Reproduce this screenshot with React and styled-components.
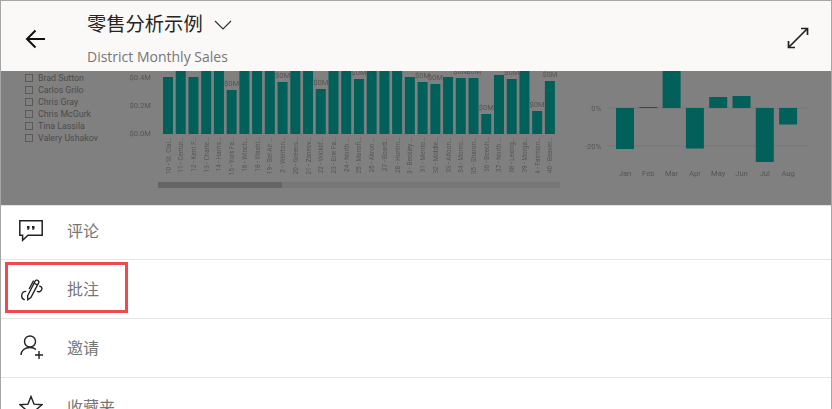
import React from "react"
import styled, { createGlobalStyle } from "styled-components"

const GlobalStyle = createGlobalStyle`
  html, body {
    margin: 0;
    padding: 0;
    background: #ffffff;
    overflow: hidden;
  }
`

const LEGEND = ["Brad Sutton", "Carlos Grilo", "Chris Gray", "Chris McGurk", "Tina Lassila", "Valery Ushakov"]

const STORES = [
  ["10 - St. Clai...", 6], ["11 - Centur...", -10], ["12 - Kent F...", 6], ["13 - Charle...", -10],
  ["14 - Harris...", -10], ["15 - York Fa...", 19], ["16 - Winch...", -10], ["18 - Washi...", -10],
  ["19 - Bel Air ...", -10], ["2 - Weirton...", 11], ["20 - Greens...", -10], ["21 - Zanesv...", -10],
  ["22 - Wicklif...", 18], ["23 - Erie Fa...", -10], ["24 - North ...", -10], ["25 - Mansfi...", 8],
  ["26 - Akron ...", -10], ["27 - Board...", -10], ["28 - Huntin...", -10], ["3 - Beckley ...", 6],
  ["31 - Mento...", 11], ["32 - Middle...", 13], ["33 - Altoon...", 6], ["34 - Monro...", 7],
  ["35 - Sharon...", 7], ["36 - Beech...", 43], ["37 - North ...", 4], ["38 - Lexing...", 8],
  ["39 - Morga...", -10], ["4 - Fairmon...", 40], ["40 - Beaver...", 10],
]

const MONTHS = [
  ["Jan", 0, 41], ["Feb", -1, 1], ["Mar", -37, 37], ["Apr", 0, 40.5],
  ["May", -11, 11], ["Jun", -12, 12], ["Jul", 0, 54], ["Aug", 0, 16.5],
]

const Page = styled.div`
  width: 832px;
  height: 409px;
  box-sizing: border-box;
  border: 1px solid #a6a6a6;
  border-bottom: 0;
  position: relative;
  overflow: hidden;
  background: #ffffff;
  font-family: "Open Sans", "Noto Sans CJK SC", sans-serif;
`

const Header = styled.header`
  height: 70px;
  background: #faf9f8;
  display: flex;
  align-items: flex-start;
  padding: 0 22px 0 24px;
`

const BackButton = styled.div`
  width: 62px;
  height: 70px;
  padding-top: 5px;
  box-sizing: border-box;
  display: flex;
  align-items: center;
  flex-shrink: 0;
`

const TitleBlock = styled.div`
  flex: 1;
  display: flex;
  flex-direction: column;
`

const TitleRow = styled.div`
  display: flex;
  align-items: center;
  gap: 11px;
  height: 47px;
`

const Title = styled.div`
  font-family: "Noto Sans CJK SC", sans-serif;
  font-size: 19.3px;
  color: #252423;
  margin-bottom: 4px;
`

const Subtitle = styled.div`
  font-family: "Open Sans", sans-serif;
  font-size: 14px;
  line-height: 18px;
  color: #767676;
`

const ExpandButton = styled.div`
  height: 70px;
  display: flex;
  align-items: center;
  padding-top: 4px;
  box-sizing: border-box;
`

const Report = styled.section`
  height: 134px;
  background: #808080;
  display: flex;
  overflow: hidden;
`

const Legend = styled.ul`
  list-style: none;
  margin: 0;
  padding: 1px 0 0 24px;
  box-sizing: border-box;
  width: 120px;
  flex-shrink: 0;
`

const LegendItem = styled.li`
  height: 12px;
  display: flex;
  align-items: center;
  gap: 5px;
  font-family: Roboto, sans-serif;
  font-size: 8.8px;
  color: #4c4c4c;
  white-space: nowrap;
`

const Check = styled.span`
  width: 6px;
  height: 6px;
  border: 1px solid #5a5a5a;
  flex-shrink: 0;
`

const Chart = styled.svg`
  display: block;
  flex-shrink: 0;
  filter: blur(0.3px);
`

const ChartText = styled.text`
  font-family: Roboto, sans-serif;
  font-size: ${(p) => p.$size || 7.6}px;
  fill: #555555;
`

const Menu = styled.nav`
  border-top: 1px solid #e3e3e3;
`

const Row = styled.div`
  height: 58px;
  border-bottom: 1px solid #e6e6e6;
  display: flex;
  align-items: center;
  padding-left: 18px;
  gap: 24px;
  &:first-child {
    height: 49px;
    padding-bottom: 4px;
  }
`

const IconBox = styled.span`
  width: 24px;
  height: 26px;
  display: flex;
  align-items: center;
  justify-content: center;
  flex-shrink: 0;
`

const RowLabel = styled.span`
  font-family: "Noto Sans CJK SC", sans-serif;
  font-size: 16px;
  color: #767676;
  margin-bottom: 2px;
`

const Callout = styled.div`
  position: absolute;
  left: 4px;
  top: 261px;
  width: 123px;
  height: 51px;
  box-sizing: border-box;
  border: 3px solid #ee4a4f;
  pointer-events: none;
`

const BackIcon = () => (
  <svg width="20" height="20" viewBox="0 0 20 20" fill="none" stroke="#111" strokeWidth="2">
    <path d="M20 10H2M10.500 1.500L2 10l8.500 8.500" />
  </svg>
)

const ChevronIcon = () => (
  <svg width="18" height="10" viewBox="0 0 18 10" fill="none" stroke="#333" strokeWidth="1.2">
    <path d="M1 1l8 8 8-8" />
  </svg>
)

const ExpandIcon = () => (
  <svg width="22" height="22" viewBox="0 0 22 22" fill="none" stroke="#222" strokeWidth="1.7">
    <path d="M1.500 20.500L20.500 1.500M14 1.500h6.500V8M1.500 14v6.500H8" />
  </svg>
)

const CommentIcon = () => (
  <svg width="24" height="22" viewBox="0 0 24 22" fill="none" stroke="#222" strokeWidth="1.5">
    <path d="M.8.800h22.400v14.500H9l-5.400 5v-5H.8z" />
    <path d="M8 6h2.500v2.500L9.300 10H8.200l.6-1.500H8zM13 6h2.500v2.500L14.300 10h-1.100l.6-1.500H13z" fill="#222" stroke="none" />
  </svg>
)

const PenIcon = () => (
  <svg width="25" height="25" viewBox="0 0 25 25" fill="none" stroke="#222" strokeWidth="1.4">
    <path d="M9 19l7.800-15.200a2 2 0 0 1 3.600 1.800L12.400 21l-3.300 2.200z" />
    <path d="M15.700 6l3.800 1.900M15.200 3.300L10.500 12" />
    <path d="M7.500 14.500a4.500 4.500 0 0 0-1.500 8.800M21 9a3 3 0 0 1 3 2.500 3.500 3.500 0 0 1-5.300 2.800" />
  </svg>
)

const PersonAddIcon = () => (
  <svg width="24" height="26" viewBox="0 0 24 26" fill="none" stroke="#222" strokeWidth="1.4">
    <circle cx="11" cy="6.500" r="5.500" />
    <path d="M2 20c0-4.500 4-7.500 9-7.500 2.500 0 4.500.7 6 2" />
    <path d="M20 16v8M16 20h8" />
  </svg>
)

const StarIcon = () => (
  <svg width="24" height="24" viewBox="0 0 24 24" fill="none" stroke="#222" strokeWidth="1.4">
    <path d="M12 1.500l3 7.600 8 .6-6.100 5.200 1.900 7.900L12 18.500l-6.800 4.300 1.900-7.900L1 9.700l8-.6z" />
  </svg>
)

const StoreChart = () => (
  <Chart width="443" height="134" viewBox="0 0 443 134">
    <ChartText x="30" y="9" textAnchor="end">$0.4M</ChartText>
    <ChartText x="30" y="37" textAnchor="end">$0.2M</ChartText>
    <ChartText x="30" y="65" textAnchor="end">$0.0M</ChartText>
    {STORES.map(([name, top], i) => {
      const x = 42 + i * 12.73
      return (
        <g key={name}>
          <rect x={x} y={top} width="10" height={63 - top} fill="#01615a" />
          {top > 6 && (
            <ChartText x={x + 5} y={top - 4.5} textAnchor="middle">$0M</ChartText>
          )}
          <ChartText transform={`translate(${x + 7.5} 66) rotate(-90)`} textAnchor="end" $size={6.4}>{name}</ChartText>
        </g>
      )
    })}
    <rect x="37" y="111" width="402" height="6" fill="#777777" />
    <rect x="37" y="111" width="124" height="6" fill="#656565" />
  </Chart>
)

const MonthChart = () => (
  <Chart width="267" height="134" viewBox="0 0 267 134">
    <ChartText x="37" y="39.500" textAnchor="end">0%</ChartText>
    <ChartText x="37" y="77.500" textAnchor="end">-20%</ChartText>
    <line x1="44" x2="244" y1="37" y2="37" stroke="#767676" />
    <line x1="44" x2="244" y1="75" y2="75" stroke="#767676" />
    {MONTHS.map(([month, offset, height], i) => {
      const x = 52 + i * 23.3
      return (
        <g key={month}>
          <rect x={x} y={37 + offset} width="18" height={height} fill="#01615a" />
          <ChartText x={x + 9} y="105" textAnchor="middle">{month}</ChartText>
        </g>
      )
    })}
  </Chart>
)

export default function App() {
  return (
    <Page>
      <GlobalStyle />
      <Header>
        <BackButton><BackIcon /></BackButton>
        <TitleBlock>
          <TitleRow>
            <Title>零售分析示例</Title>
            <ChevronIcon />
          </TitleRow>
          <Subtitle>District Monthly Sales</Subtitle>
        </TitleBlock>
        <ExpandButton><ExpandIcon /></ExpandButton>
      </Header>
      <Report>
        <Legend>
          {LEGEND.map((name) => (
            <LegendItem key={name}><Check />{name}</LegendItem>
          ))}
        </Legend>
        <StoreChart />
        <MonthChart />
      </Report>
      <Menu>
        <Row><IconBox><CommentIcon /></IconBox><RowLabel>评论</RowLabel></Row>
        <Row><IconBox><PenIcon /></IconBox><RowLabel>批注</RowLabel></Row>
        <Row><IconBox><PersonAddIcon /></IconBox><RowLabel>邀请</RowLabel></Row>
        <Row><IconBox><StarIcon /></IconBox><RowLabel>收藏夹</RowLabel></Row>
      </Menu>
      <Callout />
    </Page>
  )
}
